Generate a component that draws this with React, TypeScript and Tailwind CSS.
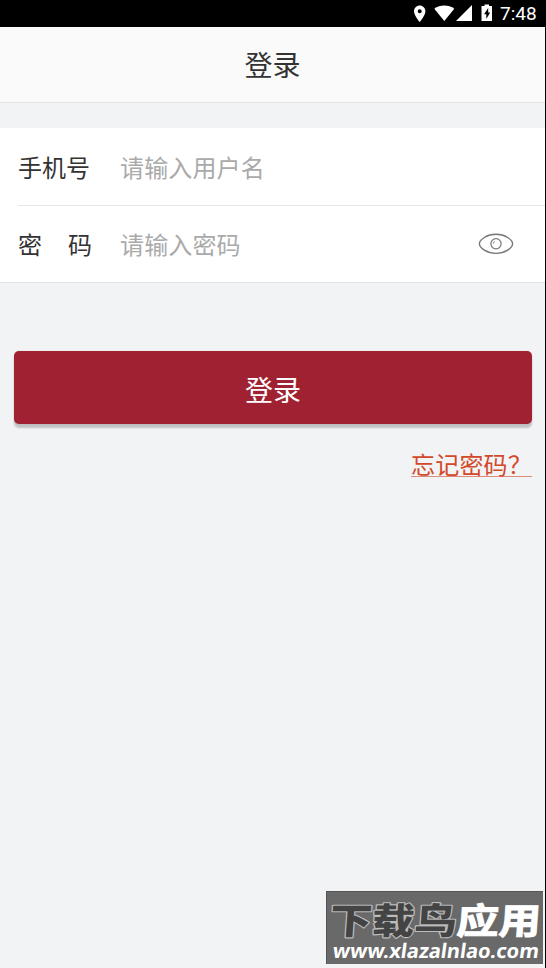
import { useState } from "react";

const StatusBar = () => (
  <div className="flex h-[27px] shrink-0 items-center bg-black pl-[410px] text-white">
    <svg width="90" height="27" viewBox="410 0 90 27" fill="currentColor">
      <path
        fillRule="evenodd"
        d="M419.700 5.500C416.600 5.500 414 8 414 11.200C414 15.500 419.700 22 419.700 22S425.400 15.500 425.400 11.200C425.400 8 422.800 5.500 419.700 5.500ZM419.700 9.200A2 2 0 1 1 419.700 13.200A2 2 0 0 1 419.700 9.200Z"
      />
      <path d="M444.300 21L434.300 8.800C440 4.400 448.600 4.400 454.300 8.800Z" />
      <path d="M456 21H472V5Z" />
      <path
        fillRule="evenodd"
        d="M484.500 4.500H489V6H492V21H481.500V6H484.500ZM488.200 8L484 14.300H486.300V19L490.200 12.500H488.200Z"
      />
    </svg>
    <span className="pt-px font-['Roboto'] text-[19px] leading-[26px]">7:48</span>
  </div>
);

const EyeIcon = () => (
  <svg width="36" height="24" viewBox="0 0 36 24" fill="none" stroke="#777">
    <path
      strokeWidth="1.400"
      d="M1.400 11.800C1.400 7.600 9 2.300 18 2.300S34.600 7.600 34.600 11.800S27 21.400 18 21.400S1.400 16 1.400 11.800Z"
    />
    <circle cx="18" cy="11.800" r="5.100" strokeWidth="1.200" />
    <path d="M15.300 11.600Q15.400 10 16.800 9.600" strokeWidth="1" />
  </svg>
);

const Watermark = () => (
  <div className="absolute top-[891px] left-[326px] h-[73px] w-[217px] border-t border-l border-[#555] bg-[#696969]">
    <svg
      className="overflow-visible"
      width="216"
      height="72"
      viewBox="327 892 216 72"
      fontFamily="'Noto Sans CJK SC', sans-serif"
    >
      <g transform="translate(329 934) skewX(-4)" fontSize="36">
        <text
          textLength="127"
          lengthAdjust="spacingAndGlyphs"
          fill="#444"
          fontWeight="900"
          stroke="#bdbdbd"
          strokeWidth="2.200"
          strokeLinejoin="round"
          paintOrder="stroke"
        >
          下载鸟
        </text>
        <text
          x="127"
          textLength="84"
          lengthAdjust="spacingAndGlyphs"
          fill="#fff"
          fontWeight="700"
          stroke="#fff"
          strokeWidth="1"
        >
          应用
        </text>
      </g>
      <text
        transform="translate(332 957.500) skewX(-8)"
        fontFamily="'Noto Sans', sans-serif"
        fontWeight="700"
        fontSize="20"
        textLength="206"
        lengthAdjust="spacingAndGlyphs"
        fill="#fff"
      >
        www.xlazalnlao.com
      </text>
    </svg>
  </div>
);

export default function App() {
  const [visible, setVisible] = useState(false);

  return (
    <div className="relative flex h-screen flex-col bg-[#f1f3f5] font-['Noto_Sans_CJK_SC',sans-serif] text-[#333]">
      <StatusBar />
      <div className="flex grow flex-col border-r border-black">
        <header className="flex h-[76px] items-center justify-center border-b border-[#e3e4e5] bg-[#fafafa]">
          <h1 className="pb-[2px] text-[28px] leading-[74px]">登录</h1>
        </header>
        <form className="mt-[25px] border-b border-[#e3e4e5] bg-white pl-[18px] text-[24px]">
          <label className="flex h-[78px] items-center border-b border-[#e6e6e6]">
            <span className="w-[102px]">手机号</span>
            <input
              className="w-[300px] tracking-[0.15px] outline-none placeholder:text-[#aaa]"
              placeholder="请输入用户名"
            />
          </label>
          <div className="flex h-[76px] items-center">
            <span className="flex w-[74px] justify-between">
              <span>密</span>
              <span>码</span>
            </span>
            <input
              className="ml-[28px] w-[300px] tracking-[0.15px] outline-none placeholder:text-[#aaa]"
              type={visible ? "text" : "password"}
              placeholder="请输入密码"
            />
            <button
              type="button"
              className="ml-[58px]"
              onClick={() => setVisible(!visible)}
            >
              <EyeIcon />
            </button>
          </div>
        </form>
        <button className="mr-[13px] ml-[14px] mt-[68px] h-[73px] rounded-[5px] bg-[#a02232] pt-[2px] text-[28px] text-white shadow-[0_4px_2px_rgba(0,0,0,0.2),0_0_1px_rgba(0,0,0,0.2)]">
          登录
        </button>
        <a
          href="#"
          className="mt-[22px] mr-[13px] flex h-[31px] w-[121px] items-center self-end border-b border-[#dd8c7c] pt-[6px] text-[24px] tracking-[0.2px] whitespace-nowrap text-[#d2492a]"
        >
          忘记密码？
        </a>
      </div>
      <Watermark />
    </div>
  );
}
